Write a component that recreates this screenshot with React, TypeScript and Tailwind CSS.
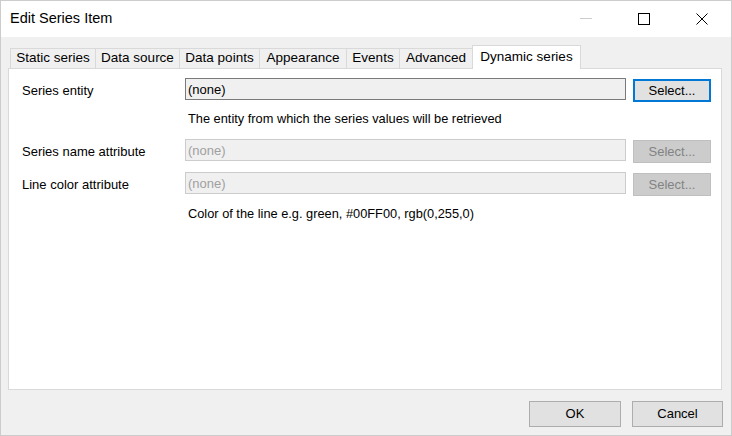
import React from 'react';

const tabs = [
  { label: 'Static series', w: 'w-[85px]' },
  { label: 'Data source', w: 'w-[84px]' },
  { label: 'Data points', w: 'w-[80px]' },
  { label: 'Appearance', w: 'w-[87px]' },
  { label: 'Events', w: 'w-[53px]' },
  { label: 'Advanced', w: 'w-[73px]' },
];

const TitleBar = () => (
  <div className="flex h-[36px] items-center justify-between bg-white">
    <span className="pl-[9px] text-[14.5px] text-black">Edit Series Item</span>
    <div className="flex h-full">
      <div className="flex w-[58px] items-center justify-center">
        <svg width="12" height="12" viewBox="0 0 12 12">
          <line x1="0" y1="5.5" x2="12" y2="5.5" stroke="#cccccc" strokeWidth="1" />
        </svg>
      </div>
      <div className="flex w-[58px] items-center justify-center">
        <svg width="12" height="12" viewBox="0 0 12 12">
          <rect x="0.5" y="0.5" width="11" height="11" fill="none" stroke="#000" strokeWidth="1" />
        </svg>
      </div>
      <div className="flex w-[58px] items-center justify-center">
        <svg width="12" height="12" viewBox="0 0 12 12">
          <path d="M0.5 0.5 L11.5 11.5 M11.5 0.5 L0.5 11.5" stroke="#000" strokeWidth="1" />
        </svg>
      </div>
    </div>
  </div>
);

interface RowProps {
  label: string;
  enabled?: boolean;
}

const FieldRow = ({ label, enabled }: RowProps) => (
  <div className="flex h-[24px] items-start">
    <div className="w-[163px] pt-[5px] leading-[16px]">{label}</div>
    <div
      className={
        enabled
          ? 'flex h-[22px] w-[441px] items-center border border-[#7a7a7a] bg-[#f0f0f0] pl-[2px] pt-[1px] text-black'
          : 'flex h-[22px] w-[441px] items-center border border-[#cccccc] bg-[#f0f0f0] pl-[2px] pt-[1px] text-[#a0a0a0]'
      }
    >
      (none)
    </div>
    <div
      className={
        enabled
          ? 'ml-[7px] mt-[1px] flex h-[23px] w-[78px] items-center justify-center border-2 border-[#0078d7] bg-[#e1e1e1] text-black'
          : 'ml-[7px] mt-[1px] flex h-[23px] w-[78px] items-center justify-center border border-[#bfbfbf] bg-[#cccccc] text-[#838383]'
      }
    >
      Select...
    </div>
  </div>
);

export default function App() {
  return (
    <div
      className="flex h-[436px] w-[732px] flex-col border border-[#cccccc] bg-[#f0f0f0] text-[13px] text-black"
      style={{ fontFamily: '"Liberation Sans", Arial, sans-serif' }}
    >
      <TitleBar />
      <div className="flex flex-col pl-[7px] pt-[8px]">
        <div className="ml-[2px] flex h-[23px] items-end">
          {tabs.map((t) => (
            <div
              key={t.label}
              className={`${t.w} flex h-[20px] items-center justify-center border-l border-t border-[#d9d9d9] bg-[#f0f0f0] text-[13.5px]`}
            >
              {t.label}
            </div>
          ))}
          <div className="relative z-10 -mb-px flex h-[24px] w-[109px] items-center justify-center border-x border-t border-[#d9d9d9] bg-white pb-[1px] text-[13.5px]">
            Dynamic series
          </div>
        </div>
        <div className="flex h-[322px] w-[714px] flex-col border border-[#d9d9d9] bg-white pl-[13px] pt-[9px]">
          <FieldRow label="Series entity" enabled />
          <div className="mt-[9px] pl-[166px] text-[12.8px] leading-[16px]">
            The entity from which the series values will be retrieved
          </div>
          <div className="mt-[12px]">
            <FieldRow label="Series name attribute" />
          </div>
          <div className="mt-[9px]">
            <FieldRow label="Line color attribute" />
          </div>
          <div className="mt-[10px] pl-[166px] text-[12.8px] leading-[16px]">
            Color of the line e.g. green, #00FF00, rgb(0,255,0)
          </div>
        </div>
        <div className="mt-[11px] flex justify-end gap-[11px] pr-[8px]">
          <div className="flex h-[26px] w-[92px] items-center justify-center border border-[#adadad] bg-[#e1e1e1]">
            OK
          </div>
          <div className="flex h-[26px] w-[91px] items-center justify-center border border-[#adadad] bg-[#e1e1e1]">
            Cancel
          </div>
        </div>
      </div>
    </div>
  );
}
